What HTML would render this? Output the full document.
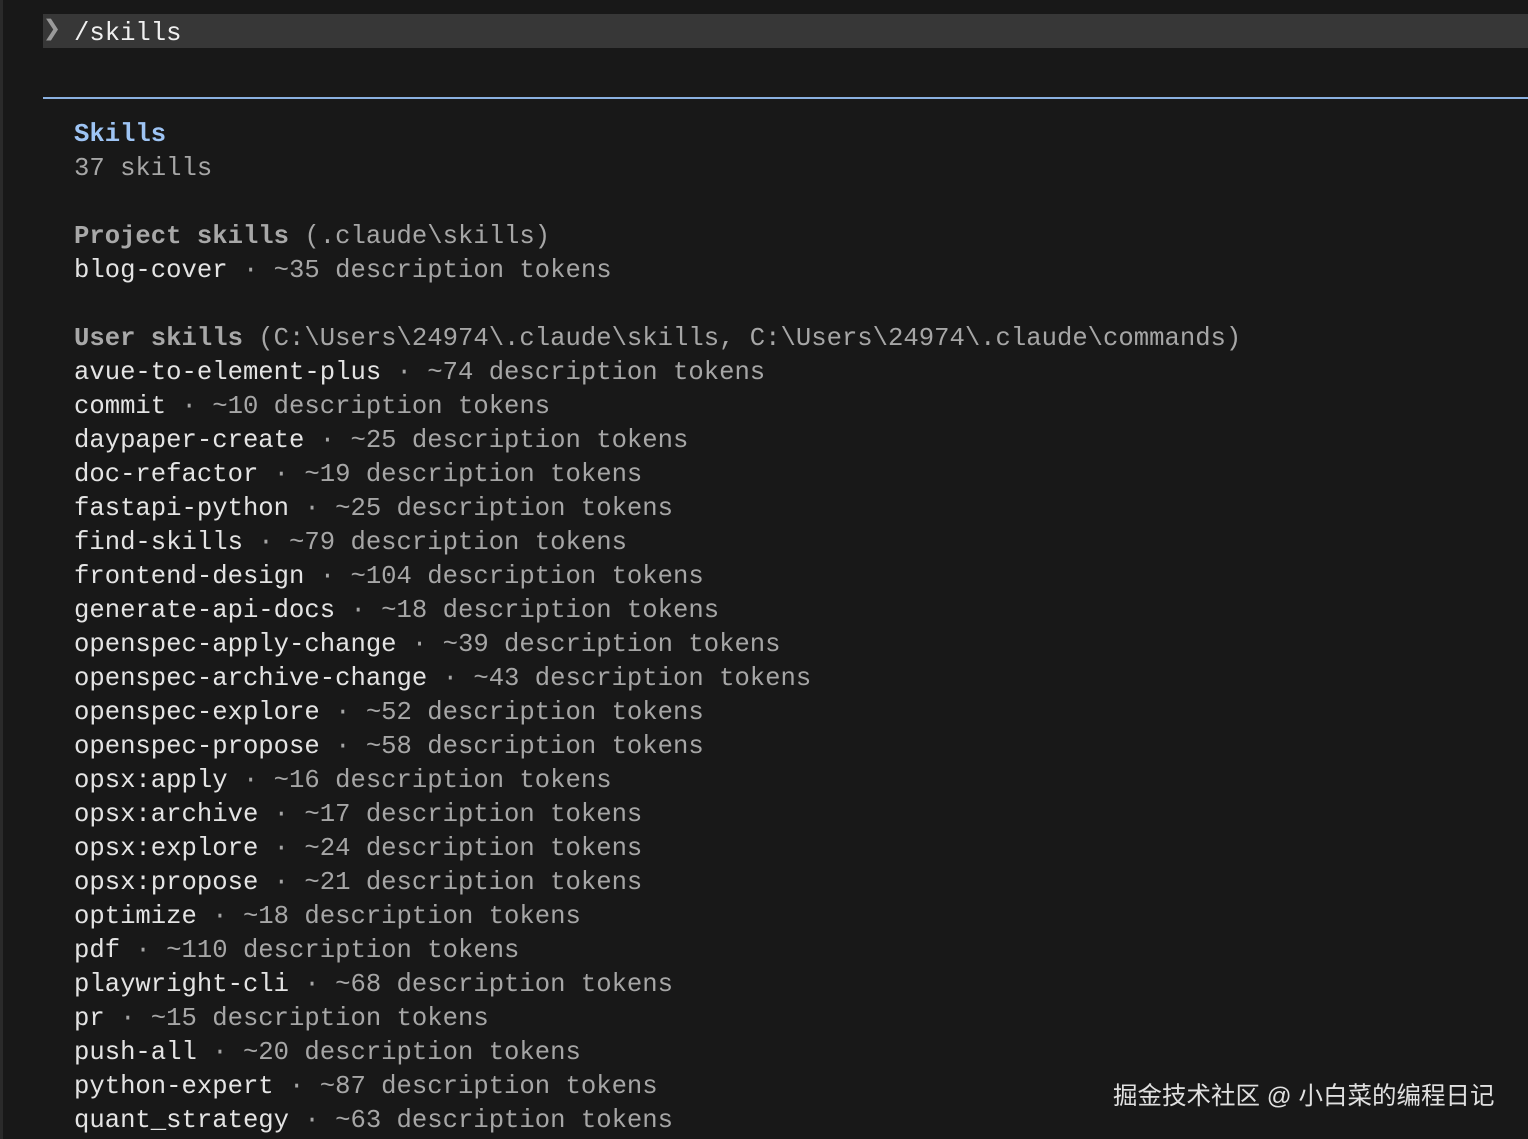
<!DOCTYPE html>
<html><head><meta charset="utf-8"><style>
body{margin:0;width:1528px;height:1139px;background:#181818;overflow:hidden;position:relative;font-family:"Liberation Mono",monospace;}
.lb{position:absolute;left:0;top:0;width:3px;height:1139px;background:#2a2a2a;}
.bar{position:absolute;left:43px;top:14px;right:0;height:34px;background:#373737;}
.bar span{position:absolute;top:3px;line-height:34px;font-size:25.6px;color:#f0f0f0;}
.sep{position:absolute;left:43px;right:0;top:97px;height:2px;background:#8ab0e0;}
.c{position:absolute;left:74px;top:118px;font-size:25.6px;line-height:34px;white-space:pre;color:#a6a6a6;}
.n{color:#e4e4e4}.h{font-weight:bold;color:#a8a8a8}.t{font-weight:bold;color:#9ec4f4}
.wm{position:absolute;left:1113px;top:1077px;font-family:"Liberation Sans","Noto Sans CJK SC",sans-serif;font-size:24.5px;color:#e0e0e0;white-space:nowrap;}
</style></head><body>
<div class="lb"></div>
<div class="bar"><span style="left:0;color:#9a9a9a;font-size:30px;top:0">❯</span><span style="left:31px">/skills</span></div>
<div class="sep"></div>
<div class="c"><span class="t">Skills</span>
37 skills

<span class="h">Project skills</span> (.claude\skills)
<span class="n">blog-cover</span> · ~35 description tokens

<span class="h">User skills</span> (C:\Users\24974\.claude\skills, C:\Users\24974\.claude\commands)
<span class="n">avue-to-element-plus</span> · ~74 description tokens
<span class="n">commit</span> · ~10 description tokens
<span class="n">daypaper-create</span> · ~25 description tokens
<span class="n">doc-refactor</span> · ~19 description tokens
<span class="n">fastapi-python</span> · ~25 description tokens
<span class="n">find-skills</span> · ~79 description tokens
<span class="n">frontend-design</span> · ~104 description tokens
<span class="n">generate-api-docs</span> · ~18 description tokens
<span class="n">openspec-apply-change</span> · ~39 description tokens
<span class="n">openspec-archive-change</span> · ~43 description tokens
<span class="n">openspec-explore</span> · ~52 description tokens
<span class="n">openspec-propose</span> · ~58 description tokens
<span class="n">opsx:apply</span> · ~16 description tokens
<span class="n">opsx:archive</span> · ~17 description tokens
<span class="n">opsx:explore</span> · ~24 description tokens
<span class="n">opsx:propose</span> · ~21 description tokens
<span class="n">optimize</span> · ~18 description tokens
<span class="n">pdf</span> · ~110 description tokens
<span class="n">playwright-cli</span> · ~68 description tokens
<span class="n">pr</span> · ~15 description tokens
<span class="n">push-all</span> · ~20 description tokens
<span class="n">python-expert</span> · ~87 description tokens
<span class="n">quant_strategy</span> · ~63 description tokens</div>
<div class="wm">掘金技术社区 @ 小白菜的编程日记</div>
</body></html>
